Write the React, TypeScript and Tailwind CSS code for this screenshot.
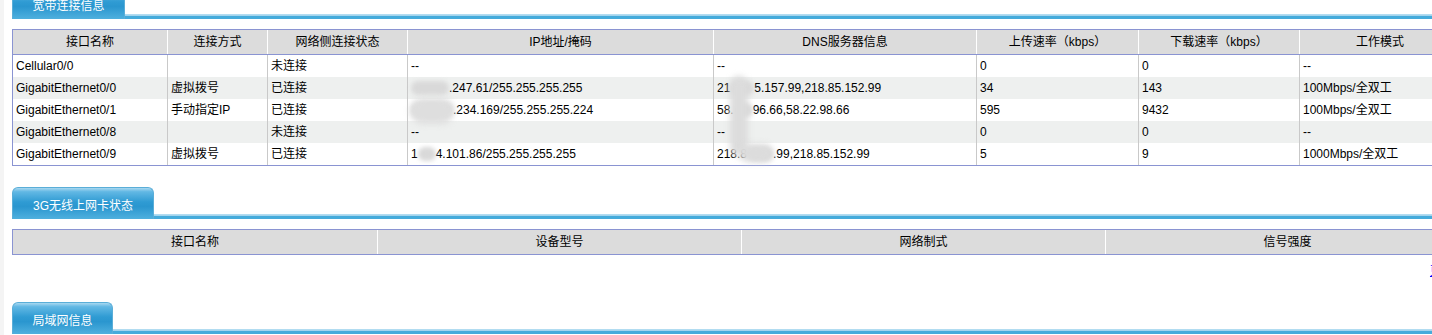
import React from "react";

const font = { fontFamily: "'Liberation Sans', 'Noto Sans CJK SC', sans-serif" };

function Tab({ title, width }: { title: string; width: string }) {
  return (
    <div className="flex items-end">
      <div
        className={`${width} h-[32px] shrink-0 rounded-t-[6px] border border-b-0 border-[#5aaed8] bg-[linear-gradient(to_bottom,#a9d8f0_0%,#62b8e4_12%,#2f9bd3_45%,#2a96cf_60%,#4fb0de_100%)] flex items-center justify-center pt-[5px] text-[12px] text-white`}
      >
        {title}
      </div>
      <div className="h-[5px] flex-1 bg-[linear-gradient(to_bottom,#b9e0f3_0%,#9fd2ec_35%,#45abdb_45%,#45abdb_100%)]" />
    </div>
  );
}

function Blob({ w }: { w: string }) {
  return <span className={`inline-block ${w} h-[14px] align-middle rounded-full bg-[#d9d9d9] blur-[2px]`} />;
}

const cols1 = ["w-[154px]", "w-[100px]", "w-[140px]", "w-[306px]", "w-[263px]", "w-[162px]", "w-[161px]", "w-[161px]"];
const head1 = ["接口名称", "连接方式", "网络侧连接状态", "IP地址/掩码", "DNS服务器信息", "上传速率（kbps）", "下载速率（kbps）", "工作模式"];

type Cell = React.ReactNode;

const rows1: Cell[][] = [
  ["Cellular0/0", "", "未连接", "--", "--", "0", "0", "--"],
  [
    "GigabitEthernet0/0",
    "虚拟拨号",
    "已连接",
    <><Blob w="w-[38px]" />.247.61/255.255.255.255</>,
    <>21<Blob w="w-[24px]" />5.157.99,218.85.152.99</>,
    "34",
    "143",
    "100Mbps/全双工",
  ],
  [
    "GigabitEthernet0/1",
    "手动指定IP",
    "已连接",
    <><Blob w="w-[42px]" />.234.169/255.255.255.224</>,
    <>58.<Blob w="w-[19px]" />96.66,58.22.98.66</>,
    "595",
    "9432",
    "100Mbps/全双工",
  ],
  ["GigabitEthernet0/8", "", "未连接", "--", "--", "0", "0", "--"],
  [
    "GigabitEthernet0/9",
    "虚拟拨号",
    "已连接",
    <>1<Blob w="w-[18px]" />4.101.86/255.255.255.255</>,
    <>218.8<Blob w="w-[26px]" />.99,218.85.152.99</>,
    "5",
    "9",
    "1000Mbps/全双工",
  ],
];

const head2 = ["接口名称", "设备型号", "网络制式", "信号强度"];

export default function App() {
  return (
    <div className="flex h-[335px] w-[1432px] overflow-hidden bg-white text-[12px] text-black" style={font}>
      <div className="w-[4px] shrink-0 bg-[#f4f4f4]" />
      <div className="w-[1464px] shrink-0 pl-[8px]">
        {/* 宽带连接信息 */}
        <div className="-mt-[13px]">
          <Tab title="宽带连接信息" width="w-[113px]" />
        </div>
        <div className="relative mt-[10px] w-[1450px] border border-[#8a94d2]">
          <div className="flex h-[25px] border-b border-[#8a94d2] bg-[#dcdcdc]">
            {head1.map((h, i) => (
              <div
                key={h}
                className={`${cols1[i]} flex shrink-0 items-center justify-center ${i > 0 ? "border-l border-white" : ""}`}
              >
                {h}
              </div>
            ))}
          </div>
          {rows1.map((r, ri) => (
            <div key={ri} className={`flex h-[22px] ${ri % 2 === 1 ? "bg-[#eef0ef]" : "bg-white"}`}>
              {r.map((c, i) => (
                <div
                  key={i}
                  className={`${cols1[i]} flex shrink-0 items-center whitespace-nowrap pl-[3px] ${i > 0 ? "border-l border-[#c9c9c9]" : ""}`}
                >
                  {c}
                </div>
              ))}
            </div>
          ))}
          {/* smudge over the DNS column */}
          <div className="absolute left-[717px] top-[46px] h-[80px] w-[18px] rounded-full bg-[#dcdcdc] blur-[3px]" />
          <div className="absolute left-[726px] top-[114px] h-[18px] w-[34px] rounded-full bg-[#dcdcdc] blur-[3px]" />
          <div className="absolute left-[397px] top-[68px] h-[26px] w-[44px] rounded-full bg-[#dedede] blur-[3px]" />
        </div>

        {/* 3G无线上网卡状态 */}
        <div className="mt-[21px]">
          <Tab title="3G无线上网卡状态" width="w-[142px]" />
        </div>
        <div className="mt-[10px] flex h-[26px] w-[1456px] border border-[#8a94d2] bg-[#dcdcdc]">
          {head2.map((h, i) => (
            <div
              key={h}
              className={`flex w-[364px] shrink-0 items-center justify-center ${i > 0 ? "border-l border-white" : ""}`}
            >
              {h}
            </div>
          ))}
        </div>
        <div className="mt-[9px] flex h-[14px] w-[1456px] justify-end">
          <a href="#" className="leading-[14px] text-[#0000ff] underline">
            更多&gt;&gt;
          </a>
        </div>

        {/* 局域网信息 */}
        <div className="mt-[24px]">
          <Tab title="局域网信息" width="w-[101px]" />
        </div>
      </div>
    </div>
  );
}
